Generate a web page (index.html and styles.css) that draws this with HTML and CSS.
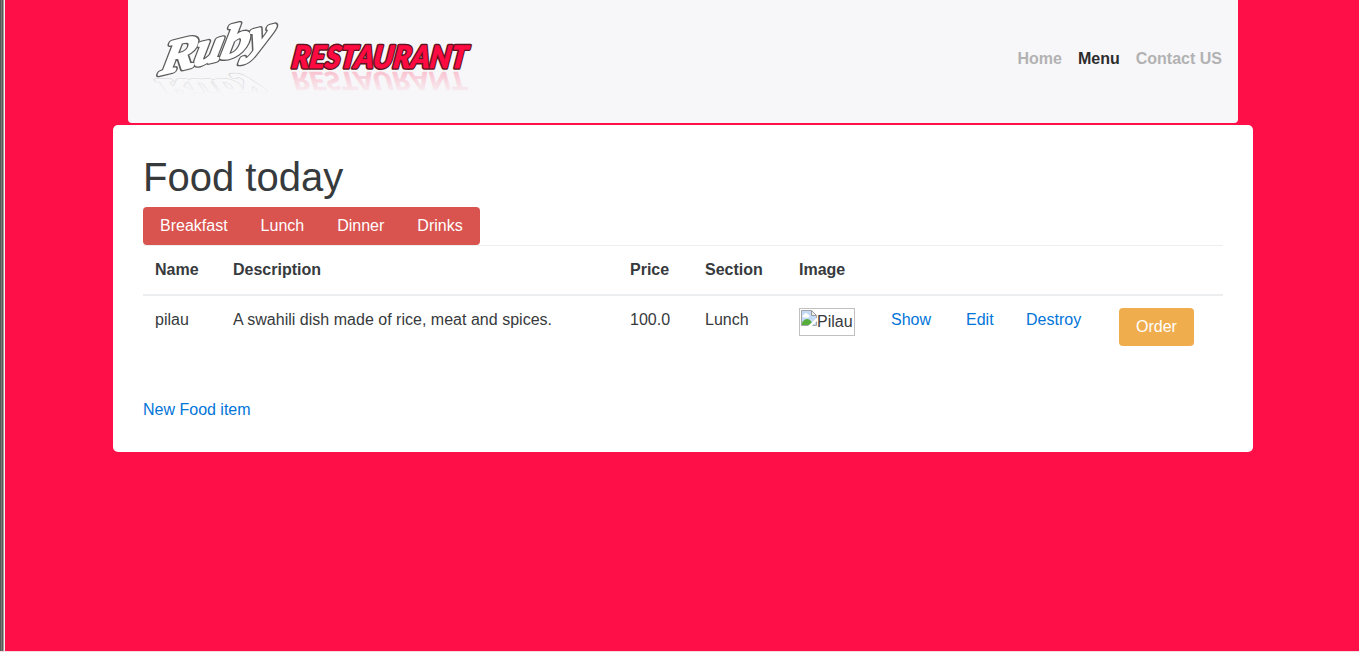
FILE: index.html
```html
<!DOCTYPE html>
<html lang="en">
<head>
<meta charset="utf-8">
<title>Ruby Restaurant</title>
<link rel="stylesheet" href="styles.css">
</head>
<body>
<div class="frame">
<main class="page">
  <header class="navbar">
    <a class="brand" href="#" aria-label="Ruby Restaurant">
      <svg width="340" height="104" viewBox="144 8 340 104">
        <defs>
          <linearGradient id="fade" x1="0" y1="0" x2="0" y2="1">
            <stop offset="0" stop-color="#f7f7f9" stop-opacity=".1"/>
            <stop offset="1" stop-color="#f7f7f9"/>
          </linearGradient>
        </defs>
        <g class="reflection" aria-hidden="true">
          <text class="ruby outline" transform="matrix(1.1 0 -.2 -.55 157 80)" textLength="94" lengthAdjust="spacingAndGlyphs">Ruby</text>
          <text class="ruby" transform="matrix(1.1 0 -.2 -.55 157 80)" textLength="94" lengthAdjust="spacingAndGlyphs">Ruby</text>
          <text class="restaurant" transform="matrix(1 0 -.1 -.8 291 72)" textLength="174" lengthAdjust="spacingAndGlyphs">RESTAURANT</text>
        </g>
        <rect x="144" y="68" width="340" height="28" fill="url(#fade)"/>
        <rect x="144" y="96" width="340" height="16" fill="#f7f7f9"/>
        <text class="ruby outline" transform="matrix(1.13 -.28 -.2 1 160 74)" textLength="98" lengthAdjust="spacingAndGlyphs">Ruby</text>
        <text class="ruby" transform="matrix(1.13 -.28 -.2 1 160 74)" textLength="98" lengthAdjust="spacingAndGlyphs">Ruby</text>
        <text class="restaurant outline" transform="matrix(1 0 -.14 1 291 68)" textLength="175" lengthAdjust="spacingAndGlyphs">RESTAURANT</text>
        <text class="restaurant" transform="matrix(1 0 -.14 1 291 68)" textLength="175" lengthAdjust="spacingAndGlyphs">RESTAURANT</text>
      </svg>
    </a>
    <nav class="nav">
      <a href="#">Home</a>
      <a class="active" href="#">Menu</a>
      <a href="#">Contact US</a>
    </nav>
  </header>
  <section class="card">
    <h1>Food today</h1>
    <div class="btn-group">
      <a class="btn" href="#">Breakfast</a>
      <a class="btn" href="#">Lunch</a>
      <a class="btn" href="#">Dinner</a>
      <a class="btn" href="#">Drinks</a>
    </div>
    <table class="table">
      <colgroup>
        <col class="c-name"><col class="c-desc"><col class="c-price"><col class="c-section"><col class="c-image"><col class="c-show"><col class="c-edit"><col class="c-destroy"><col class="c-order">
      </colgroup>
      <thead>
        <tr><th>Name</th><th>Description</th><th>Price</th><th>Section</th><th>Image</th><th colspan="4"></th></tr>
      </thead>
      <tbody>
        <tr>
          <td>pilau</td>
          <td class="description">A swahili dish made of rice, meat and spices.</td>
          <td>100.0</td>
          <td>Lunch</td>
          <td><span class="missing"><svg width="16" height="16" viewBox="0 0 16 16">
            <path d="M.5.5H10.500L15.500 5.500V15.500H.5z" fill="#c3d9f8"/>
            <path d="M3 7.500a1.500 1.500 0 0 1 0-3 2.200 2.200 0 0 1 4 0 1.500 1.500 0 0 1 0 3z" fill="#fff"/>
            <path d="M1 15v-2.500C3 9.500 6 8 9 10L13 15z" fill="#56ad3c"/>
            <path d="M10.500.5H.5V15.500H15.500V5.500" fill="none" stroke="#a3a3a3"/>
            <path d="M10.500.5V5.500h5z" fill="#eee" stroke="#999"/>
            <path d="M7 16L16 7.500V11L11 16z" fill="#fff"/>
          </svg><span>Pilau</span></span></td>
          <td><a href="#">Show</a></td>
          <td><a href="#">Edit</a></td>
          <td><a href="#">Destroy</a></td>
          <td><a class="btn btn-order" href="#">Order</a></td>
        </tr>
      </tbody>
    </table>
    <a class="new-item" href="#">New Food item</a>
  </section>
</main>
</div>
</body>
</html>
```

FILE: styles.css
```css
* { box-sizing: border-box; }
body {
  margin: 0;
  background: #ff0f47;
  color: #373a3c;
  font: 16px/24px "Liberation Sans", Arial, sans-serif;
}
a { color: #0275d8; text-decoration: none; }
.frame {
  height: 652px;
  padding-left: 108px;
  background: linear-gradient(90deg, #5a5955 0 1px, #777672 1px 2px, #5a5955 2px 3px, #a5a39f 3px 4px, #f2f0ed 4px 5px, transparent 5px);
  border-bottom: 1px solid #f5dfe2;
}
.page { width: 1140px; margin-left: 5px; }
.navbar {
  display: flex;
  justify-content: space-between;
  height: 123px;
  margin: 0 15px 2px;
  padding: 8px 16px;
  background: #f7f7f9;
  border-radius: 0 0 4px 4px;
}
.brand svg { display: block; }
.ruby {
  font: italic 46px "Liberation Serif", serif;
  fill: #fff;
  stroke: #fff;
  stroke-width: 3.6px;
  stroke-linejoin: round;
}
.ruby.outline { stroke: #5c5c5c; stroke-width: 6.2px; }
.restaurant {
  font: italic 900 31px Lato, sans-serif;
  fill: #ff0b42;
  stroke: #ff0b42;
  stroke-width: .6px;
  stroke-linejoin: round;
}
.restaurant.outline { stroke: #621322; stroke-width: 3.6px; }
.reflection { opacity: .28; }
.nav { display: flex; gap: 16px; padding-top: 39px; font-weight: bold; }
.nav a { color: #b2b2b3; }
.nav .active { color: #2c2c2d; }
.card {
  height: 327px;
  padding: 30px;
  background: #fff;
  border-radius: 5px;
}
h1 { margin: 0 0 8px; font-size: 40px; line-height: 44px; font-weight: normal; }
.btn-group {
  display: flex;
  width: max-content;
  background: #d9534f;
  border-radius: 4px;
}
.btn { padding: 7px 17px; color: #fff; white-space: nowrap; }
.btn + .btn { margin-left: -1px; }
.btn-order { display: inline-block; background: #f0ad4e; border-radius: 4px; }
.table {
  width: 1080px;
  margin-bottom: 40px;
  table-layout: fixed;
  border-collapse: separate;
  border-spacing: 0;
}
.table th, .table td { padding: 12px; text-align: left; vertical-align: top; }
.table th { height: 51px; border-top: 1px solid #eceeef; border-bottom: 2px solid #eceeef; }
.table .description { letter-spacing: .015px; }
.c-name { width: 78px; }
.c-desc { width: 397px; }
.c-price, .c-show { width: 75px; }
.c-section { width: 94px; }
.c-image { width: 92px; }
.c-edit { width: 60px; }
.c-destroy { width: 93px; }
.c-order { width: 116px; }
.missing {
  display: flex;
  width: 56px;
  height: 28px;
  padding: 1px;
  border: 1px solid #c0c0c0;
}
.missing svg { flex: none; }
.new-item { display: block; width: max-content; }
```
